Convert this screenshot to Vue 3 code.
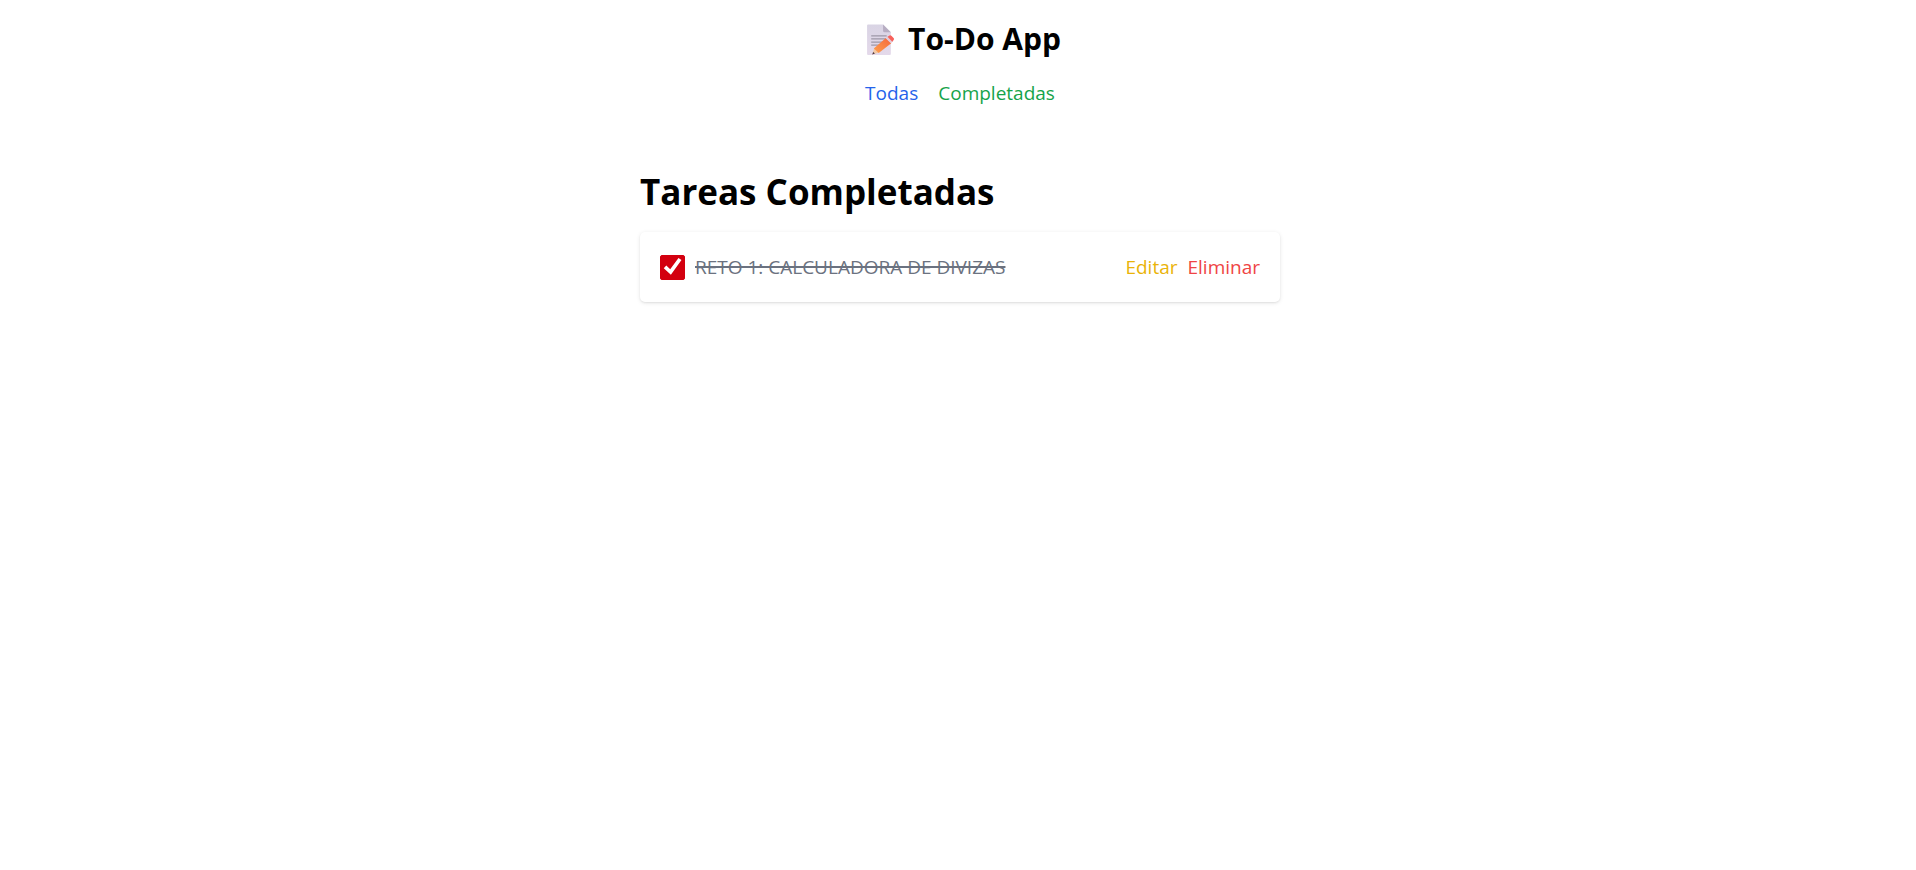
<script setup>
import { ref } from 'vue'

const tasks = ref([{ id: 1, text: 'RETO 1: CALCULADORA DE DIVIZAS', done: true }])

const remove = (id) => {
  tasks.value = tasks.value.filter((t) => t.id !== id)
}
</script>

<template>
  <div class="page">
    <header class="header">
      <h1 class="title">
        <svg class="memo" viewBox="0 0 26 30" aria-hidden="true">
          <defs>
            <linearGradient id="sheet" x1="0" y1="0" x2="0" y2="1">
              <stop offset="0" stop-color="#d9d4e4" />
              <stop offset="1" stop-color="#e4d9ea" />
            </linearGradient>
            <linearGradient id="pencil" x1="0" y1="1" x2="1" y2="0">
              <stop offset="0" stop-color="#ffa04e" />
              <stop offset="1" stop-color="#f4673c" />
            </linearGradient>
          </defs>
          <path d="M1 0.5h14.5l7.5 7.5v21a1 1 0 0 1-1 1H1a1 1 0 0 1-1-1V1.500a1 1 0 0 1 1-1z" fill="url(#sheet)" />
          <path d="M15.500 0.500l7.500 7.500h-6a1.500 1.500 0 0 1-1.500-1.500z" fill="#b7adc2" />
          <path d="M4 11.500h15M4 14.500h15M4 17.500h13M4 20.500h9" stroke="#9d98a8" stroke-width="1.200" />
          <path d="M5 29.500l2-6.300 4.400 4.500z" fill="#f3c8a4" />
          <path d="M5 29.500l0.900-2.500 1.700 1.600z" fill="#4b3543" />
          <path d="M6.500 23.800L18.200 13.500l5.200 5.200L11.300 28z" fill="url(#pencil)" />
          <path d="M18 13.800l2.200-1.900 4.900 4.900-2 1.900z" fill="#e3cbd8" />
          <path d="M19.800 12.400l1.200-0.900a2 2 0 0 1 2.800 0l1.600 1.700a2 2 0 0 1 0 2.800l-1 1.100z" fill="#f8615b" />
        </svg>
        To-Do App
      </h1>
      <nav class="nav">
        <a class="all" href="#todas">Todas</a>
        <a class="completed" href="#completadas">Completadas</a>
      </nav>
    </header>

    <main class="content">
      <h2 class="heading">Tareas Completadas</h2>
      <ul class="list">
        <li v-for="task in tasks" :key="task.id" class="card">
          <label class="task">
            <input v-model="task.done" class="check" type="checkbox" />
            <span :class="{ done: task.done }">{{ task.text }}</span>
          </label>
          <div class="actions">
            <button class="edit" type="button">Editar</button>
            <button class="delete" type="button" @click="remove(task.id)">Eliminar</button>
          </div>
        </li>
      </ul>
    </main>
  </div>
</template>

<style>
body {
  background: #fff;
}
</style>

<style scoped>
.page {
  padding: 20px 0 20px 4px;
  font-family: "Segoe UI", "Open Sans", "Noto Sans", sans-serif;
  font-size: 19px;
  line-height: 30px;
  color: #000;
}
.header {
  display: flex;
  flex-direction: column;
  align-items: center;
  gap: 20px;
}
.title {
  display: flex;
  align-items: center;
  gap: 14px;
  margin: 0;
  padding-left: 8px;
  font-size: 30px;
  line-height: 38px;
  font-weight: 700;
}
.memo {
  width: 27px;
  height: 31px;
}
.nav {
  display: flex;
  gap: 20px;
}
.nav a {
  text-decoration: none;
}
.nav .all {
  color: #2563eb;
}
.nav .completed {
  color: #16a34a;
}
.content {
  box-sizing: border-box;
  width: 100%;
  max-width: 640px;
  margin: 62px auto 0;
}
.heading {
  margin: 0 0 18px;
  font-size: 35px;
  line-height: 44px;
  font-weight: 700;
}
.list {
  margin: 0;
  padding: 0;
  list-style: none;
}
.card {
  display: flex;
  align-items: center;
  justify-content: space-between;
  padding: 20px;
  border-radius: 5px;
  background: #fff;
  box-shadow: 0 1px 4px rgba(0, 0, 0, 0.1), 0 1px 2px rgba(0, 0, 0, 0.06);
}
.task {
  display: flex;
  align-items: center;
  gap: 10px;
}
.check {
  appearance: none;
  width: 25px;
  height: 25px;
  margin: 0;
  border: 1px solid #767676;
  border-radius: 2px;
  background: #fff;
}
.check:checked {
  border-color: #d3000f;
  background: #d3000f;
}
.check:checked::before {
  content: "";
  display: block;
  width: 23px;
  height: 23px;
  background: #fff;
  clip-path: polygon(12% 55%, 23% 44%, 40% 60%, 76% 11%, 89% 20%, 43% 84%);
}
.done {
  color: #6b7280;
  text-decoration: line-through;
  text-decoration-thickness: 2px;
}
.actions {
  display: flex;
  gap: 10px;
}
.actions button {
  padding: 0;
  border: 0;
  background: none;
  font: inherit;
  cursor: pointer;
}
.actions .edit {
  color: #eab308;
}
.actions .delete {
  color: #ef4444;
}
</style>
